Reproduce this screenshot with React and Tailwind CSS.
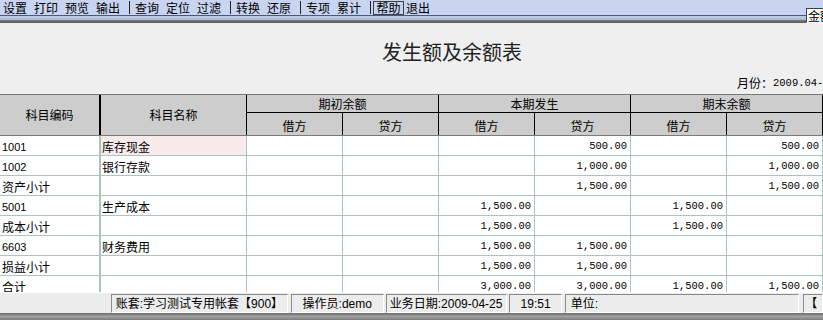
const cn = "font-['Noto_Sans_CJK_SC',sans-serif]";
const num = "font-['Liberation_Mono','Noto_Sans_CJK_SC',monospace] text-[10.5px]";
const mixed = "font-['Liberation_Sans','Noto_Sans_CJK_SC',sans-serif] text-[12px]";

const toolbar = [
  ['设置', '打印', '预览', '输出'],
  ['查询', '定位', '过滤'],
  ['转换', '还原'],
  ['专项', '累计'],
];

const rows = [
  { code: '1001', name: '库存现金', v: ['', '', '', '500.00', '', '500.00'] },
  { code: '1002', name: '银行存款', v: ['', '', '', '1,000.00', '', '1,000.00'] },
  { code: '资产小计', name: '', v: ['', '', '', '1,500.00', '', '1,500.00'] },
  { code: '5001', name: '生产成本', v: ['', '', '1,500.00', '', '1,500.00', ''] },
  { code: '成本小计', name: '', v: ['', '', '1,500.00', '', '1,500.00', ''] },
  { code: '6603', name: '财务费用', v: ['', '', '1,500.00', '1,500.00', '', ''] },
  { code: '损益小计', name: '', v: ['', '', '1,500.00', '1,500.00', '', ''] },
  { code: '合计', name: '', v: ['', '', '3,000.00', '3,000.00', '1,500.00', '1,500.00'] },
];

const groups = ['期初余额', '本期发生', '期末余额'];

function Panel({ className, children }) {
  return (
    <div className={`h-[19px] mt-px border border-t-[#8a8a8a] border-l-[#8a8a8a] border-b-white border-r-white flex items-center whitespace-nowrap overflow-hidden ${className}`}>
      {children}
    </div>
  );
}

export default function App() {
  return (
    <div className={`w-[823px] h-[320px] overflow-hidden relative bg-[#efefef] flex flex-col text-black ${cn}`}>
      {/* toolbar */}
      <div className="h-[15px] shrink-0 bg-[#c8d4f0] flex items-center pl-[3px] text-[12px] leading-[15px] whitespace-nowrap">
        {toolbar.map((g, gi) => (
          <div key={gi} className="flex items-center shrink-0">
            {g.map((w) => (
              <span key={w} className="w-[24px] mr-[7px] shrink-0">{w}</span>
            ))}
            <div className={`w-px h-[13px] bg-[#222] ml-[2px] shrink-0 ${gi === toolbar.length - 1 ? 'mr-[2px]' : 'mr-[5px]'}`} />
          </div>
        ))}
        <span className="w-[31px] h-[14px] shrink-0 flex items-center justify-center border border-[#404040] leading-[12px] mr-[2px]">帮助</span>
        <span className="shrink-0">退出</span>
      </div>
      <div className="h-px shrink-0 bg-[#44598a]" />
      <div className="h-[4px] shrink-0 bg-gradient-to-b from-[#c4cfe8] to-[#aab6cf]" />
      <div className="h-[3px] shrink-0 bg-gradient-to-b from-[#7a7a7a] to-[#5c5c5c]" />
      <div className="absolute left-[806px] top-[8px] w-[20px] h-[15px] overflow-hidden whitespace-nowrap bg-white border border-t-[#404040] border-l-[#404040] border-b-white border-r-white text-[12px] leading-[13px] pl-[1px]">金额</div>

      {/* title area */}
      <div className="h-[71px] shrink-0 whitespace-nowrap">
        <div className="mt-[17px] h-[24px] leading-[24px] text-[20px] pl-[382px] text-[#222]">发生额及余额表</div>
        <div className="mt-[12px] h-[14px] leading-[14px] pl-[737px] flex items-center">
          <span className="text-[12px]">月份：</span>
          <span className={num}>2009.04-2009.04</span>
        </div>
      </div>

      {/* table */}
      <div className="flex-1 min-h-0 overflow-hidden bg-white">
        <div className="h-[42px] border-t border-b border-t-[#777] border-b-[#7a7a7a] bg-[#cdcdcd] flex text-[12px]">
          <div className="w-[101px] border-r-2 border-black flex items-center justify-center">科目编码</div>
          <div className="w-[146px] border-r border-black flex items-center justify-center">科目名称</div>
          {groups.map((g) => (
            <div key={g} className="w-[192px] flex flex-col">
              <div className="h-[18px] border-b border-r border-black flex items-center justify-center leading-[14px]">{g}</div>
              <div className="h-[22px] flex">
                <div className="w-[96px] border-r border-black flex items-end justify-center pb-[1px] leading-[16px]">借方</div>
                <div className="w-[96px] border-r border-black flex items-end justify-center pb-[1px] leading-[16px]">贷方</div>
              </div>
            </div>
          ))}
        </div>
        {rows.map((r, i) => (
          <div key={i} className="h-[20px] flex border-b border-[#a9c6be]">
            <div className={`w-[101px] border-r-2 border-[#a9c6be] flex items-center pt-[3px] pl-[2px] ${/\d/.test(r.code) ? "font-['Liberation_Sans',sans-serif] text-[11px]" : 'text-[12px]'}`}>{r.code}</div>
            <div className={`w-[146px] border-r border-[#a9c6be] flex items-center pt-[3px] pl-px text-[12px] ${i === 0 ? 'bg-[#f6eaea]' : ''}`}>{r.name}</div>
            {r.v.map((v, j) => (
              <div key={j} className={`w-[96px] border-r border-[#a9c6be] flex items-center justify-end pt-[3px] pr-[3px] ${num}`}>{v}</div>
            ))}
          </div>
        ))}
      </div>

      {/* status bar */}
      <div className={`h-[21px] shrink-0 bg-[#ececec] border-t border-white flex ${mixed}`}>
        <div className="w-[112px]" />
        <Panel className="w-[179px] pl-[4px]">账套:学习测试专用帐套【900】</Panel>
        <Panel className="w-[94px] ml-[3px] justify-center">操作员:demo</Panel>
        <Panel className="w-[123px] ml-[2px] pl-[3px]">业务日期:2009-04-25</Panel>
        <Panel className="w-[53px] ml-[2px] justify-center">19:51</Panel>
        <Panel className="w-[237px] ml-[3px] pl-[5px]">单位:</Panel>
        <Panel className="w-[20px] ml-[4px] pl-[1px]">【</Panel>
      </div>
      <div className="h-[7px] shrink-0 bg-gradient-to-b from-[#6a6a6a] via-[#a2a2a2] to-[#7c7c7c]" />
    </div>
  );
}
